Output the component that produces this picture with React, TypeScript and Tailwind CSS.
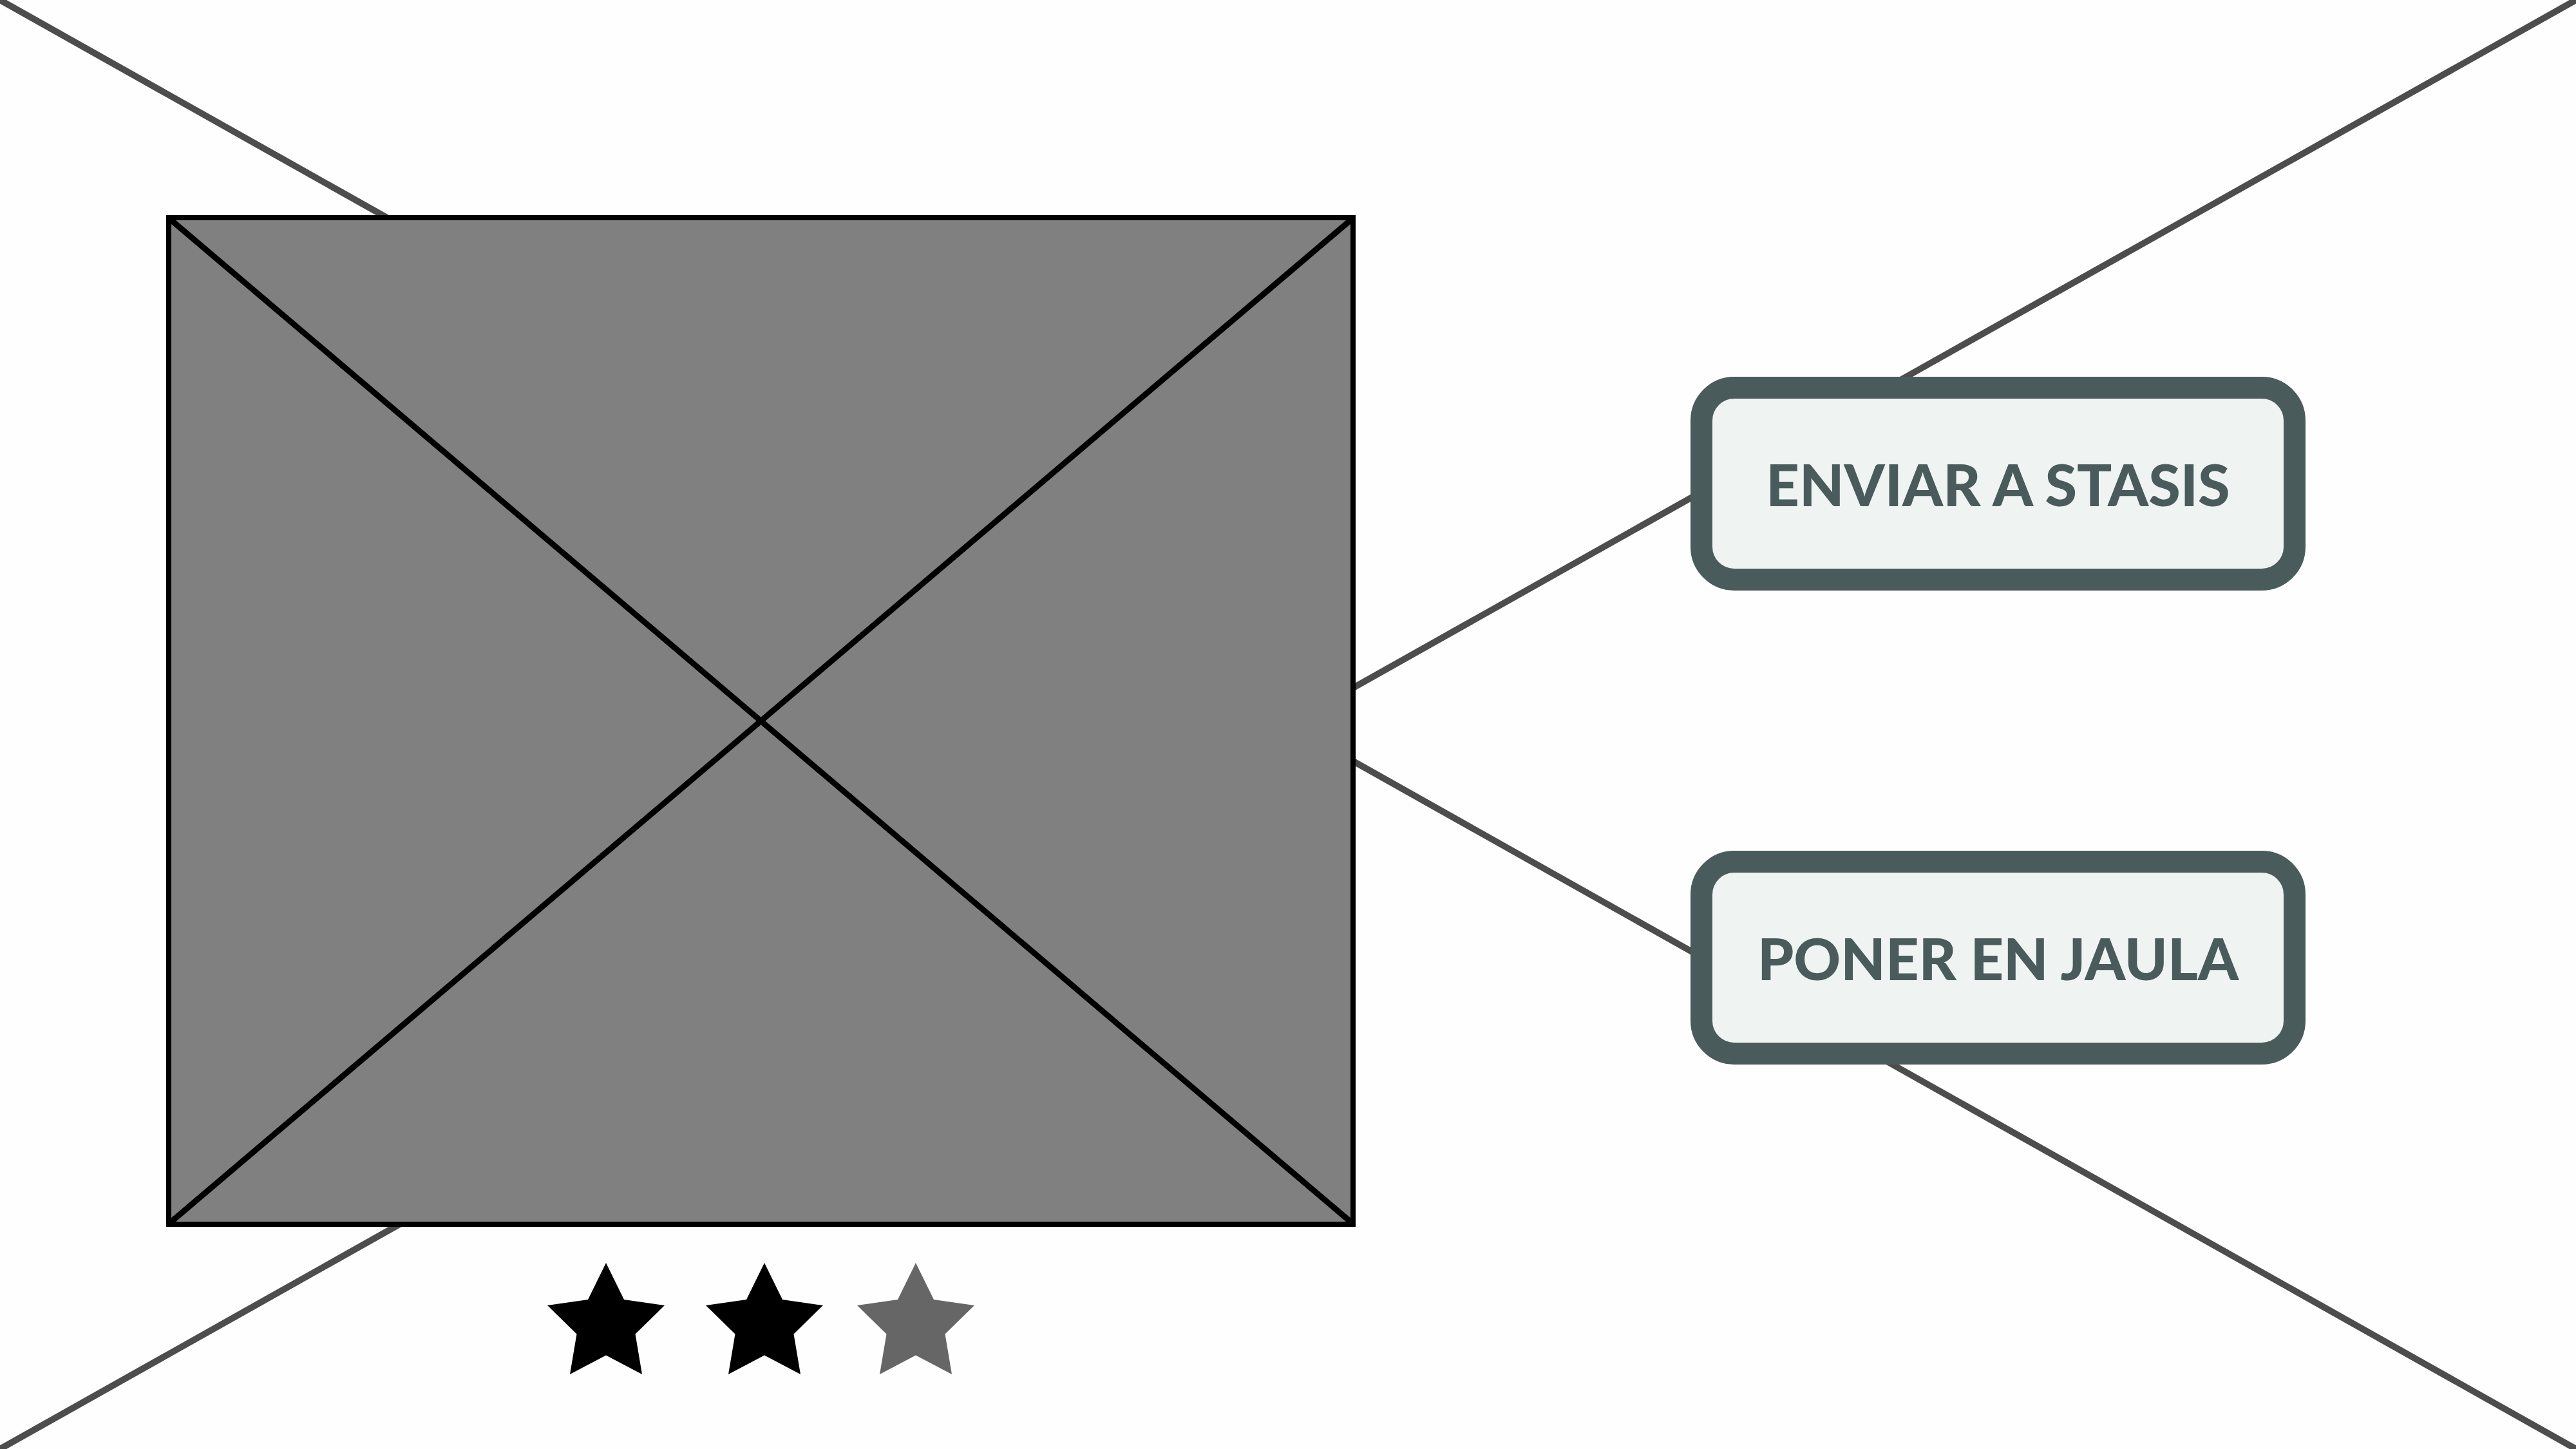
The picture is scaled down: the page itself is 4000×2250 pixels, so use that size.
const ratings = [
  { id: 'earned', className: 'text-black', stars: 2 },
  { id: 'missing', className: 'text-[#666666]', stars: 1 },
];

const actions = ['ENVIAR A STASIS', 'PONER EN JAULA'];

function Backdrop() {
  return (
    <svg
      className="absolute inset-0 h-full w-full"
      viewBox="0 0 4000 2250"
      preserveAspectRatio="none"
      aria-hidden="true"
    >
      <path d="M0 0L4000 2250M4000 0L0 2250" stroke="#4d4d4d" strokeWidth="10" fill="none" />
    </svg>
  );
}

function Star() {
  return (
    <svg className="h-[173px] w-[182px]" viewBox="0 0 182 173" fill="currentColor" aria-hidden="true">
      <path d="M91 0L119 57L182 66L136.5 110.5L147 173L91 143.5L35 173L45.5 110.5L0 66L63 57Z" />
    </svg>
  );
}

function Placeholder() {
  return (
    <div className="aspect-[1847/1571] w-full border-8 border-black bg-[#808080]">
      <svg
        className="block h-full w-full overflow-visible"
        viewBox="0 0 1831 1555"
        preserveAspectRatio="none"
        role="img"
        aria-label="Imagen"
      >
        <path d="M0 0L1831 1555M1831 0L0 1555" stroke="#000" strokeWidth="9" fill="none" />
      </svg>
    </div>
  );
}

export default function App() {
  return (
    <div className="relative min-h-screen bg-[#fefefe]">
      <Backdrop />
      <main className="relative grid grid-cols-[1847fr_955fr] gap-[520px] pt-[334px] pr-[420px] pl-[258px]">
        <section className="flex flex-col items-center gap-14">
          <Placeholder />
          <div className="flex gap-[53px]" role="img" aria-label="2 de 3 estrellas">
            {ratings.map((group) => (
              <div key={group.id} className={`flex gap-16 ${group.className}`}>
                {Array.from({ length: group.stars }, (_, i) => (
                  <Star key={i} />
                ))}
              </div>
            ))}
          </div>
        </section>
        <section className="flex flex-col gap-[404px] pt-[251px]">
          {actions.map((label) => (
            <button
              key={label}
              type="button"
              className="w-full rounded-[68px] border-[34px] border-[#4a5b5b] bg-[#eff4f3] py-[72px] text-center font-['Lato',sans-serif] text-[90px] leading-[120px] font-black whitespace-nowrap text-[#4a5b5b]"
            >
              {label}
            </button>
          ))}
        </section>
      </main>
    </div>
  );
}
